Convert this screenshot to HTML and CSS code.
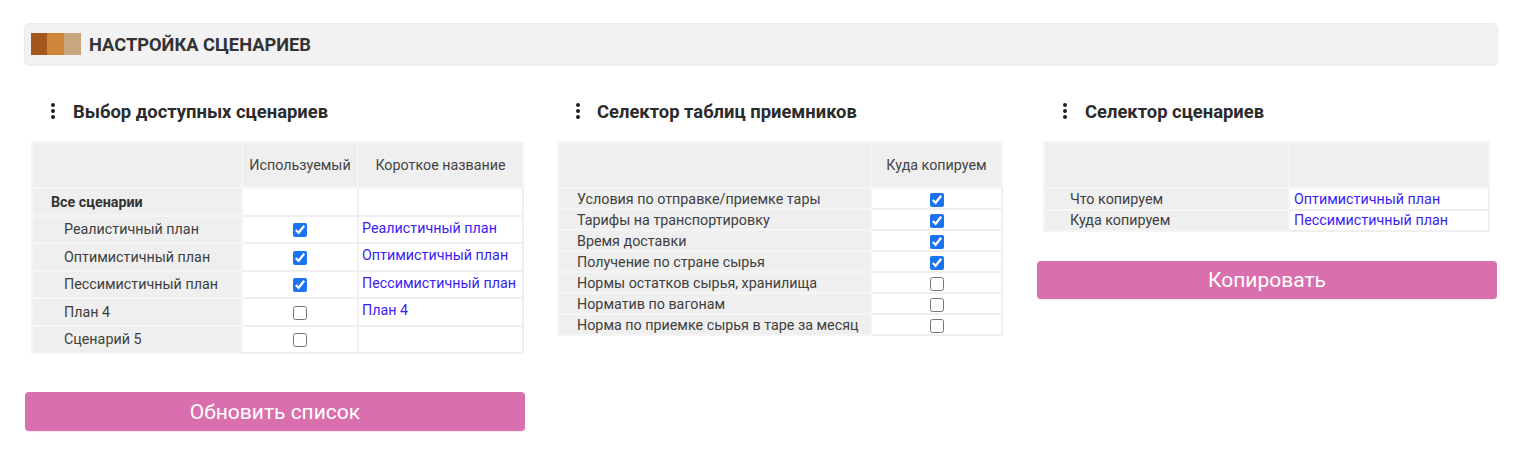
FILE: index.html
```html
<!DOCTYPE html>
<html lang="ru">
<head>
<meta charset="utf-8">
<title>Настройка сценариев</title>
<link rel="stylesheet" href="styles.css">
</head>
<body>
<div class="page">
  <div class="topbar">
    <div class="logo"><span class="l1"></span><span class="l2"></span><span class="l3"></span></div>
    <div class="topbar-title">НАСТРОЙКА СЦЕНАРИЕВ</div>
  </div>

  <div class="columns">
    <section class="col col1">
      <h2 class="sec-title">
        <svg class="dots" width="4" height="16" viewBox="0 0 4 16"><circle cx="2" cy="2" r="2"/><circle cx="2" cy="8" r="2"/><circle cx="2" cy="14" r="2"/></svg>
        <span>Выбор доступных сценариев</span>
      </h2>
      <table class="grid t1">
        <colgroup><col class="c1"><col class="c2"><col class="c3"></colgroup>
        <thead>
          <tr><th></th><th>Используемый</th><th>Короткое название</th></tr>
        </thead>
        <tbody>
          <tr class="grp"><td class="lbl bold">Все сценарии</td><td class="w"></td><td class="w"></td></tr>
          <tr><td class="lbl ind">Реалистичный план</td><td class="w chk"><input type="checkbox" checked></td><td class="w link">Реалистичный план</td></tr>
          <tr><td class="lbl ind">Оптимистичный план</td><td class="w chk"><input type="checkbox" checked></td><td class="w link">Оптимистичный план</td></tr>
          <tr><td class="lbl ind">Пессимистичный план</td><td class="w chk"><input type="checkbox" checked></td><td class="w link">Пессимистичный план</td></tr>
          <tr><td class="lbl ind">План 4</td><td class="w chk"><input type="checkbox"></td><td class="w link">План 4</td></tr>
          <tr><td class="lbl ind">Сценарий 5</td><td class="w chk"><input type="checkbox"></td><td class="w link"></td></tr>
        </tbody>
      </table>
      <button class="btn btn1" type="button">Обновить список</button>
    </section>

    <section class="col col2">
      <h2 class="sec-title">
        <svg class="dots" width="4" height="16" viewBox="0 0 4 16"><circle cx="2" cy="2" r="2"/><circle cx="2" cy="8" r="2"/><circle cx="2" cy="14" r="2"/></svg>
        <span>Селектор таблиц приемников</span>
      </h2>
      <table class="grid t2">
        <colgroup><col class="c1"><col class="c2"></colgroup>
        <thead>
          <tr><th></th><th>Куда копируем</th></tr>
        </thead>
        <tbody>
          <tr><td class="lbl">Условия по отправке/приемке тары</td><td class="w chk"><input type="checkbox" checked></td></tr>
          <tr><td class="lbl">Тарифы на транспортировку</td><td class="w chk"><input type="checkbox" checked></td></tr>
          <tr><td class="lbl">Время доставки</td><td class="w chk"><input type="checkbox" checked></td></tr>
          <tr><td class="lbl">Получение по стране сырья</td><td class="w chk"><input type="checkbox" checked></td></tr>
          <tr><td class="lbl">Нормы остатков сырья, хранилища</td><td class="w chk"><input type="checkbox"></td></tr>
          <tr><td class="lbl">Норматив по вагонам</td><td class="w chk"><input type="checkbox"></td></tr>
          <tr><td class="lbl">Норма по приемке сырья в таре за месяц</td><td class="w chk"><input type="checkbox"></td></tr>
        </tbody>
      </table>
    </section>

    <section class="col col3">
      <h2 class="sec-title">
        <svg class="dots" width="4" height="16" viewBox="0 0 4 16"><circle cx="2" cy="2" r="2"/><circle cx="2" cy="8" r="2"/><circle cx="2" cy="14" r="2"/></svg>
        <span>Селектор сценариев</span>
      </h2>
      <table class="grid t3">
        <colgroup><col class="c1"><col class="c2"></colgroup>
        <thead>
          <tr><th></th><th></th></tr>
        </thead>
        <tbody>
          <tr><td class="lbl">Что копируем</td><td class="w link">Оптимистичный план</td></tr>
          <tr><td class="lbl">Куда копируем</td><td class="w link">Пессимистичный план</td></tr>
        </tbody>
      </table>
      <button class="btn btn3" type="button">Копировать</button>
    </section>
  </div>
</div>
</body>
</html>
```

FILE: styles.css
```css
* { box-sizing: border-box; }

html, body {
  margin: 0;
  padding: 0;
  background: #ffffff;
}

body {
  font-family: Roboto, "Liberation Sans", Arial, sans-serif;
  color: #333333;
  width: 1536px;
  height: 461px;
  overflow: hidden;
}

.page {
  padding: 23px 0 0 24px;
}

/* Top bar */
.topbar {
  width: 1474px;
  height: 42px;
  background: #f2f2f2;
  border: 1px solid #ebebeb;
  border-radius: 5px;
  box-shadow: 0 1px 2px rgba(0, 0, 0, 0.06);
  display: flex;
  align-items: center;
  padding-left: 6px;
}

.logo {
  display: flex;
  height: 22px;
}
.logo span { display: block; width: 17px; height: 22px; }
.logo .l1 { background: #a3581b; width: 16px; }
.logo .l2 { background: #d08638; }
.logo .l3 { background: #c9a67f; }

.topbar-title {
  margin-left: 8px;
  font-weight: 700;
  font-size: 18.3px;
  color: #333333;
}

/* Columns */
.columns {
  display: grid;
  grid-template-columns: 533px 480px 461px;
  margin-top: 35px;
}

.col {
  display: flex;
  flex-direction: column;
  align-items: flex-start;
}

.sec-title {
  margin: 0;
  height: 22px;
  display: flex;
  align-items: center;
  font-size: 18.4px;
  font-weight: 700;
  color: #2b2b2b;
}
.dots { fill: #1e1e24; flex: none; }

.col1 .sec-title { padding-left: 27px; gap: 18px; }
.col2 .sec-title { padding-left: 19px; gap: 17px; }
.col3 .sec-title { padding-left: 26px; gap: 18px; }

/* Tables */
.grid {
  border-collapse: collapse;
  table-layout: fixed;
  margin-top: 19px;
  font-size: 14.3px;
  color: #404040;
}

.grid th,
.grid td {
  border: 2px solid #f5f5f5;
  padding: 0;
  overflow: hidden;
  white-space: nowrap;
}

.grid th {
  background: #efefef;
  font-weight: 400;
  height: 46px;
  text-align: center;
  vertical-align: middle;
  color: #444444;
}

.grid td.lbl { background: #efefef; }
.grid td.w { background: #ffffff; border-color: #efefef; }

.grid td.bold { font-weight: 700; color: #333333; }

.grid td.chk { text-align: center; vertical-align: middle; }
.grid td.link {
  color: #3a1ef2;
  vertical-align: top;
}

.grid input[type="checkbox"] {
  width: 14px;
  height: 14px;
  margin: 0;
  vertical-align: middle;
  accent-color: #1a73f0;
}

/* Table 1 */
.t1 { margin-left: 7px; width: 491px; }
.t1 .c1 { width: 210px; }
.t1 .c2 { width: 116px; }
.t1 .c3 { width: 165px; }
.t1 td { height: 27.5px; }
.t1 td.lbl { padding-left: 31px; }
.t1 td.bold { padding-left: 18px; }
.t1 td.link { padding: 3px 0 0 3px; }

/* Table 2 */
.t2 { width: 444px; }
.t2 .c1 { width: 313px; }
.t2 .c2 { width: 131px; }
.t2 td { height: 21px; }
.t2 td.lbl { padding-left: 18px; }

/* Table 3 */
.t3 { margin-left: 6px; width: 445px; }
.t3 .c1 { width: 245px; }
.t3 .c2 { width: 200px; }
.t3 td { height: 21.5px; }
.t3 td.lbl { padding-left: 25px; }
.t3 td.link { padding: 0 0 0 4px; vertical-align: middle; }

/* Buttons */
.btn {
  border: none;
  background: #d970ad;
  color: #ffffff;
  font-family: Roboto, "Liberation Sans", Arial, sans-serif;
  font-size: 21px;
  border-radius: 4px;
  box-shadow: 0 1px 1px rgba(0, 0, 0, 0.08);
  cursor: pointer;
  padding: 0;
}
.btn1 { width: 500px; height: 39px; margin-top: 38px; margin-left: 1px; }
.btn3 { width: 460px; height: 38px; margin-top: 29px; }
```
